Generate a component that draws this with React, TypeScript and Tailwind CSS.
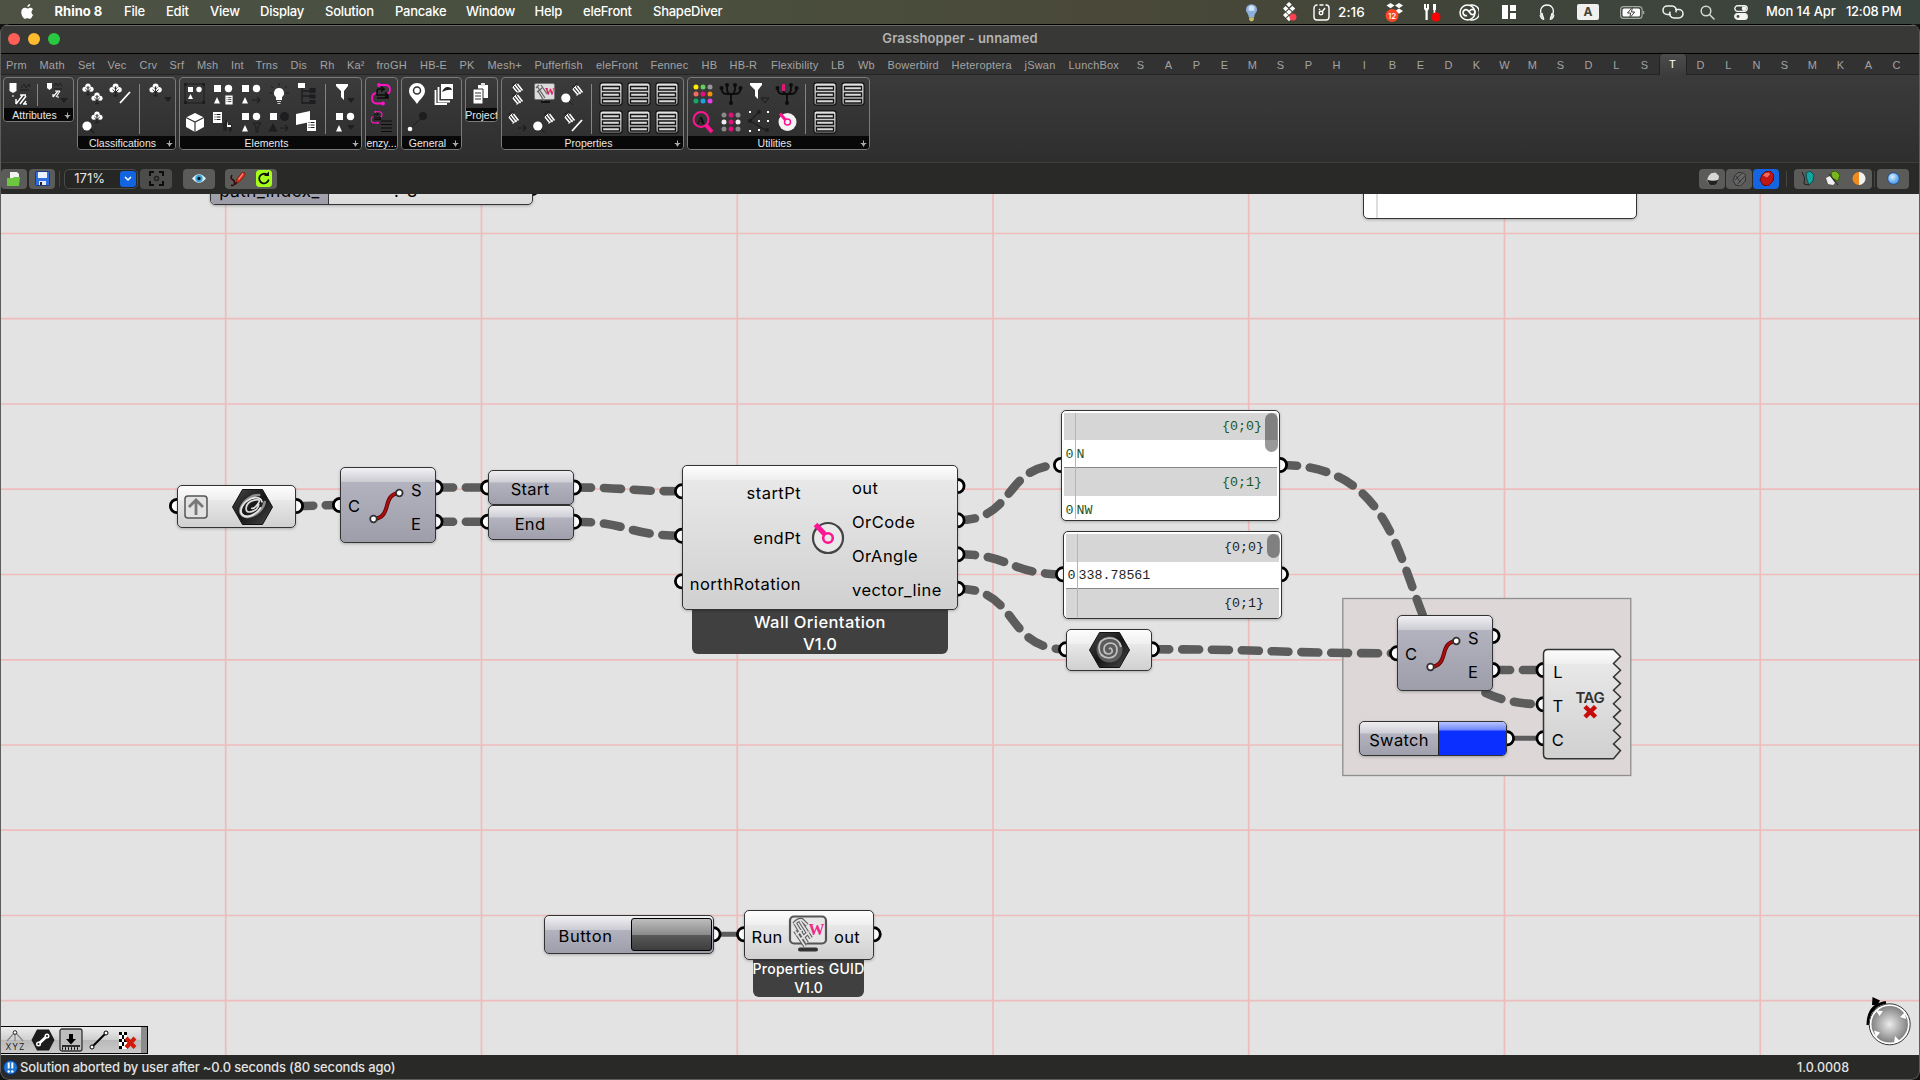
import React from 'react';

type Pt = [number, number];

/* ---------- menu bar ---------- */

const menus: [string, number][] = [
  ['File', 42], ['Edit', 44], ['View', 50], ['Display', 65], ['Solution', 70], ['Pancake', 71],
  ['Window', 68.5], ['Help', 48.5], ['eleFront', 70], ['ShapeDiver', 90],
];

function Slot({ w, children }: { w: number; children: React.ReactNode }) {
  return (
    <span className="flex h-6 shrink-0 items-center justify-center" style={{ width: w }}>
      {children}
    </span>
  );
}

function MenuBar() {
  return (
    <div className="flex h-6 items-center bg-[linear-gradient(to_right,#4d5245,#49503f_30%,#4a4939_58%,#414539_75%,#39443f)] text-[13px] font-medium text-white">
      <svg className="mb-[1px] ml-[20px] h-[17px] w-[15px]" viewBox="0 0 15 18" fill="#fff">
        <path d="M10.300 1c.1 1.700-1.300 3.200-3 3.300C7.100 2.700 8.700 1.100 10.300 1zM13 13.200c-.9 2-1.900 3.600-3.200 3.600-.9 0-1.300-.6-2.400-.6s-1.500.6-2.400.6C3.200 16.800.9 13 .9 9.800.9 6.700 2.700 5 4.600 5c1.100 0 2 .7 2.800.7.700 0 1.800-.8 3.200-.8 1.200 0 2.200.6 2.900 1.600-2.600 1.500-2.200 5.200.500 6.200z" />
      </svg>
      <span className="ml-[19.500px] w-[69.500px] shrink-0 font-bold">Rhino 8</span>
      {menus.map(([name, w]) => (
        <span key={name} className="shrink-0 tracking-[-0.25px]" style={{ width: w }}>{name}</span>
      ))}
      <div className="ml-auto flex items-center pr-[18px]">
        <Slot w={38}>
          <svg className="ml-[6px]" width="13" height="19" viewBox="0 0 14 20"><path d="M7 1a6 6 0 0 0-6 6c0 3 3 4 3 8h6c0-4 3-5 3-8a6 6 0 0 0-6-6z" fill="#8fb0de" /><path d="M4 4q3-3 6 0v4H4z" fill="#d5e6f8" /><path d="M4.500 15h5v3l-1.500 1.500h-2L4.500 18z" fill="#c9bd70" /></svg>
        </Slot>
        <Slot w={35}>
          <svg className="ml-[10px]" width="14" height="20" viewBox="0 0 14 20" fill="#fff"><path d="M6 0l2.800 2.600L6 5.200 3.200 2.600zM2.600 4l2.800 2.600-2.800 2.600L0 6.600zM9.400 4l2.800 2.600-2.800 2.600-2.800-2.600zM6 7.500l2.800 2.600L6 12.700l-2.800-2.600zM2.600 10.500l2.800 2.600-2.800 2.600L0 13.100zM6 14l2.800 2.600L6 19.200l-2.800-2.600z" /><circle cx="10" cy="15" r="3.500" fill="#ff4050" /></svg>
        </Slot>
        <Slot w={36}>
          <svg className="ml-[3px]" width="17" height="17" viewBox="0 0 17 17" fill="none" stroke="#fff" strokeWidth="1.400"><path d="M4.500 1H4a3 3 0 0 0-3 3v9a3 3 0 0 0 3 3h9a3 3 0 0 0 3-3V4a3 3 0 0 0-3-3h-.5M6.500 1h4" /><circle cx="8" cy="9" r="1.800" /><path d="M9 8l3-4M6 5l1 1" /></svg>
        </Slot>
        <span className="w-[42px] text-[13.500px] tracking-[0.1px]">2:16</span>
        <Slot w={26}>
          <svg className="ml-[4px]" width="20" height="20" viewBox="0 0 20 20" fill="#fff"><path d="M5.500 1l4 2.600-4 2.600-4-2.600zM14 1l4 2.600-4 2.600-4-2.600zM14 6.500l4 2.600-4 2.600-4-2.600z" /><circle cx="7" cy="13.500" r="6.500" fill="#fb4626" /><text x="7" y="16.500" fontSize="8" fontFamily="Inter" textAnchor="middle">12</text></svg>
        </Slot>
        <Slot w={46}>
          <svg className="ml-[6px]" width="17" height="20" viewBox="0 0 17 20" fill="#fff"><path d="M0 2h2v4h1V2h2v5L3.700 9v9H1.500V9L0 7zM9 2h3v6h-.7v8H9.600V8H9z" /><circle cx="12" cy="15" r="4.500" fill="#f00" /></svg>
        </Slot>
        <Slot w={34}>
          <svg width="20" height="17" viewBox="0 0 20 17" fill="none" stroke="#fff" strokeWidth="1.500"><circle cx="8.500" cy="8.500" r="7.500" /><path d="M11 1.300a7.500 7.500 0 1 1 0 14.400" /><path d="M8 11.500a3 3 0 1 1 .8-5.200l3.400 4a2.600 2.600 0 1 0 .4-4.800q-1 .3-2.600 2.300" strokeWidth="1.700" /></svg>
        </Slot>
        <Slot w={45}>
          <svg width="14" height="16" viewBox="0 0 14 16" fill="#fff"><path d="M0 1h6v14H0zM8 1h6v6H8zM8 9h6v6H8z" /></svg>
        </Slot>
        <Slot w={32}>
          <svg width="16" height="17" viewBox="0 0 16 17" fill="none" stroke="#fff" strokeWidth="1.300"><path d="M2.500 11C0 5 3.500 1 8 1s8 4 5.500 10" /><path d="M3 9l2 6.500-2.500-.8-1.500-3zM13 9l-2 6.500 2.500-.8 1.500-3z" fill="#ddd" strokeWidth="1" /></svg>
        </Slot>
        <Slot w={50}>
          <span className="flex h-4 w-[22px] items-center justify-center rounded-[2px] bg-[#f0f0ee] text-[12px] font-bold text-[#414539]">A</span>
        </Slot>
        <Slot w={38}>
          <svg width="25" height="13" viewBox="0 0 25 13" fill="none"><rect x=".6" y=".6" width="21.500" height="11.800" rx="3" stroke="#a6a8a4" strokeWidth="1.100" /><rect x="2.500" y="2.500" width="17.500" height="8" rx="1.500" fill="#fff" /><path d="M12.500 1L7.500 7h3.200l-1 5 5-6h-3.200z" fill="#fff" stroke="#414539" /><path d="M23.500 5v3" stroke="#a6a8a4" strokeWidth="1.500" /></svg>
        </Slot>
        <Slot w={43}>
          <svg width="22" height="14" viewBox="0 0 22 14" fill="none" stroke="#f2f2f2" strokeWidth="1.500"><path d="M9 9.500H5.200a4.200 4.200 0 0 1 0-8.400h5a4.200 4.200 0 0 1 3.600 6.300" /><path d="M13 4.500h3.800a4.200 4.200 0 0 1 0 8.400h-5a4.200 4.200 0 0 1-3.600-6.300" /></svg>
        </Slot>
        <Slot w={27}>
          <svg width="15" height="15" viewBox="0 0 15 15" fill="none" stroke="#d6d8d6" strokeWidth="1.500"><circle cx="6" cy="6" r="4.800" /><path d="M9.500 9.500l4.500 4.500" strokeLinecap="round" /></svg>
        </Slot>
        <Slot w={39}>
          <svg width="14" height="15" viewBox="0 0 14 15" fill="none" stroke="#f2f2f2" strokeWidth="1.400"><rect x=".8" y=".8" width="12.400" height="5.600" rx="2.800" /><rect x=".8" y="8.600" width="12.400" height="5.600" rx="2.800" fill="#f2f2f2" /><circle cx="10" cy="3.600" r="1.600" fill="#f2f2f2" /><circle cx="4" cy="11.400" r="1.400" fill="#414539" stroke="none" /></svg>
        </Slot>
        <span className="ml-[6px] w-[80px] whitespace-nowrap tracking-[-0.1px]">Mon 14 Apr</span>
        <span className="w-[56px] whitespace-nowrap tracking-[-0.3px]">12:08 PM</span>
      </div>
    </div>
  );
}

/* ---------- tabs ---------- */

const tabStarts: [string, number][] = [
  ['Prm', 6.5], ['Math', 40], ['Set', 78.5], ['Vec', 108], ['Crv', 140], ['Srf', 170], ['Msh', 197.5],
  ['Int', 231.5], ['Trns', 256], ['Dis', 291], ['Rh', 320.5], ['Ka²', 347.5], ['froGH', 377], ['HB-E', 420.5],
  ['PK', 460], ['Mesh+', 488], ['Pufferfish', 535], ['eleFront', 596.5], ['Fennec', 651], ['HB', 702],
  ['HB-R', 730], ['Flexibility', 771.5], ['LB', 831.5], ['Wb', 858.5], ['Bowerbird', 888],
  ['Heteroptera', 952], ['jSwan', 1025], ['LunchBox', 1069],
];
const letterTabs = 'SAPEMSPHIBEDKWMSDLSTDLNSMKAC'.split('');

function Tabs() {
  return (
    <div className="flex h-[22px] items-center border-t border-black bg-[#323232] pl-[6px] font-['Liberation_Sans',sans-serif] text-[11px] tracking-[0.2px] text-[#a3a3a3] shadow-[inset_0_-1px_0_#242424]">
      {tabStarts.map(([name, x], i) => (
        <span key={name} className="shrink-0 pt-px whitespace-nowrap" style={{ width: (i < tabStarts.length - 1 ? tabStarts[i + 1][1] : 1127) - x }}>{name}</span>
      ))}
      {letterTabs.map((l, i) =>
        l === 'T' ? (
          <span key={i} className="flex h-[22px] w-7 shrink-0 justify-center rounded-t-[4px] border-x border-[#222] bg-[linear-gradient(#4c4c4c,#3b3b3b)] pt-[2px] text-white">{l}</span>
        ) : (
          <span key={i} className="w-7 shrink-0 pt-px text-center">{l}</span>
        ),
      )}
    </div>
  );
}

/* ---------- ribbon icons (24 x 24) ---------- */

const W = '#fff';
const K = '#1d1d20';

function Ico({ children }: { children?: React.ReactNode }) {
  return (
    <span className="flex size-7 items-center justify-center">
      <svg width="24" height="24" viewBox="0 0 24 24" fill="none">{children}</svg>
    </span>
  );
}
const Tree = ({ x, y, s = 1 }: { x: number; y: number; s?: number }) => (
  <g transform={`translate(${x} ${y}) scale(${s})`}>
    <g fill={W}><circle cx="6" cy="3.200" r="2.700" /><circle cx="2.900" cy="6.200" r="2.500" /><circle cx="9.100" cy="6.200" r="2.500" /><circle cx="6" cy="6" r="2" /></g>
    <path d="M6 3v9M6 8.500L3.300 6M6 8.500L8.700 6M6 5.500L4.500 4M6 5.500L7.500 4M4 11.700h4" stroke={K} strokeWidth=".9" />
  </g>
);
const Clip = ({ x, y }: { x: number; y: number }) => (
  <g transform={`translate(${x} ${y})`}>
    <path d="M1 5l5 6M3 3l5.500 7M5.500 2l5 6.500" stroke={W} strokeWidth="1.500" />
    <path d="M1 5l3.500-3.500M4.500 11.500L10 7" stroke={W} strokeWidth=".9" />
    <path d="M3 0h3M.5 3L2 1" stroke={K} />
  </g>
);
const Sq = ({ x, y, c = W, s = 7 }: { x: number; y: number; c?: string; s?: number }) => <rect x={x} y={y} width={s} height={s} fill={c} />;
const Ci = ({ x, y, c = W, r = 3.7 }: { x: number; y: number; c?: string; r?: number }) => <circle cx={x} cy={y} r={r} fill={c} />;
const Tr = ({ x, y, c = W }: { x: number; y: number; c?: string }) => <path d={`M${x} ${y}l3 6.500h-6z`} fill={c} />;
const Doc = ({ x, y }: { x: number; y: number }) => (
  <g transform={`translate(${x} ${y})`}><path d="M0 0h9v11H0z" fill={W} /><path d="M1.500 2.500h1M3.500 2.500h4M1.500 5h1M3.500 5h4M1.500 7.500h1M3.500 7.500h4" stroke={K} /></g>
);
const Fn = ({ x, y, s = 1, c = W }: { x: number; y: number; s?: number; c?: string }) => (
  <path transform={`translate(${x} ${y}) scale(${s})`} d="M0 0h12v2L8 7v9l-3-3V7L0 2z" fill={c} />
);
const Dn = ({ x, y }: { x: number; y: number }) => <path d={`M${x} ${y}h8l-4 5z`} fill="#1f1f22" />;
const Arrow = ({ x, y }: { x: number; y: number }) => <path d={`M${x} ${y}h8m-3-3l3 3-3 3`} stroke={K} strokeWidth="1.200" />;

const Attr1 = () => <Ico><path d="M2.500 1h7v8l-3.500 2-3.500-2z" fill={W} /><path d="M14 6l3-4 2 4 3-4 1 3M13 8h9" stroke={K} /><path d="M6 13v2" stroke={W} /><path d="M9 22l7-9M13 22l6-8M17 22l2-3M9 17v5M13 13h6M16 22h4" stroke={W} strokeWidth="1.500" /></Ico>;
const Attr2 = () => <Ico><path d="M2 1h5v5l-2.500 2L2 6z" fill={W} /><path d="M9 4l2-3 2 3 2-3 2 3M9 7h8" stroke={K} /><path d="M8 15l5-6M11 15l4-6M10 9h5M8 12v3M12 15h2" stroke={W} strokeWidth="1.200" /><Dn x={15} y={16} /></Ico>;
const C1 = () => <Ico><Tree x={1} y={1} /><Tree x={10} y={10} /></Ico>;
const C2 = () => <Ico><Tree x={0} y={1} s={1.1} /><path d="M11 21L21 10" stroke={W} strokeWidth="1.800" /></Ico>;
const C3 = () => <Ico><Tree x={2} y={1} s={1.1} /><Dn x={17} y={15} /></Ico>;
const C4 = () => <Ico><Tree x={10} y={1} /><Ci x={6} y={16} r={4.6} /><path d="M9 19l4 4" stroke={K} strokeWidth="1.500" /></Ico>;
const E1 = () => <Ico><rect x="2" y="2" width="19" height="19" stroke={K} /><path d="M1 1h3v3H1zM19 1h3v3h-3zM1 19h3v3H1zM19 19h3v3h-3z" fill={K} /><Sq x={5} y={5} s={5} /><Ci x={16} y={7.5} r={2.7} /><path d="M7.500 12l2.500 5H5z" fill={W} /></Ico>;
const Trio = ({ children }: { children?: React.ReactNode }) => <Ico><Sq x={3} y={3} /><Ci x={17.5} y={6.5} /><Tr x={6} y={15} />{children}</Ico>;
const Bulb = () => <Ico><path d="M12 6a5 5 0 0 0-3 9v3h6v-3a5 5 0 0 0-3-9z" fill={W} /><path d="M10 19.500h4M10.500 21.500h3" stroke="#ccc" /><path d="M12 1v3M4 4l2 2M20 4l-2 2M2 11h3M19 11h3" stroke={K} /></Ico>;
const Hier = () => <Ico><rect x="3" y="1" width="7" height="5" fill={W} /><path d="M7 6v15h8M7 9h8M7 14h8" stroke={K} strokeWidth="1.300" /><path d="M14.500 6h6v5h-6zM14.500 12.500h6v4h-6zM14.500 18h6v4h-6z" fill={K} /></Ico>;
const FnDn = () => <Ico><Fn x={3} y={2} /><Dn x={14} y={16} /></Ico>;
const Cube = () => <Ico><path d="M12 3l9 4.500v9.500l-9 5-9-5V7.500z" fill={W} /><path d="M3 7.500l9 4.500 9-4.500M12 12v10" stroke="#333" strokeWidth="1.200" /></Ico>;
const DocCh = () => <Ico><Doc x={2} y={2} /><path d="M15 10v5h5v6M15 15v6M13 13v8M19 18v4" stroke={K} strokeWidth="1.200" /><path d="M16 11l1 4h3v2h-4z" fill={W} /></Ico>;
const SqDot = () => <Ico><Sq x={3} y={3} /><Ci x={17.5} y={6.5} c={K} r={4.5} /><path d="M6 13l4.500 8.500h-9z" fill={K} /><Arrow x={13} y={18} /></Ico>;
const Flag = () => <Ico><path d="M1 4l14-3v11L1 15z" fill={W} /><Doc x={12} y={10} /></Ico>;
const Loop = ({ s = 1 }: { s?: number }) => (
  <g transform={`translate(1 0) scale(${s})`}><path d="M9 3h6q5 0 5 4.500T16.500 12M7 11q-5 0-5 5t4 5.500h7" stroke="#ff12c4" strokeWidth="1.800" /><path d="M14 7H9q-2 0-2 3v3h9q2 0 2 3H7M11 4.500L14 7l-3 2.500M15 10.500l3 2.500-3 2.500" stroke="#0b0b0b" strokeWidth="1.600" /><circle cx="9" cy="3" r="1.900" fill="#ff12c4" /><circle cx="13" cy="21.500" r="1.900" fill="#ff12c4" /></g>
);
const Pin = () => <Ico><path d="M12 1a8 8 0 0 0-8 8c0 5 5 8 8 13 3-5 8-8 8-13a8 8 0 0 0-8-8z" fill={W} /><circle cx="12" cy="8.500" r="3.500" stroke="#333" strokeWidth="1.500" /></Ico>;
const Pages = () => <Ico><path d="M8 2h12v15H8z" fill={W} /><path d="M5.500 5v14.500H17M2.500 8v14H14" stroke={W} strokeWidth="1.800" /><path d="M9 10q3-7 9-4l1 2q-4-1-10 2z" fill="#222" /></Ico>;
const Link = () => <Ico><path d="M5 19L18 6" stroke={K} /><circle cx="5" cy="19" r="2.300" fill={W} /><circle cx="18" cy="6" r="4" fill={K} /></Ico>;
const Proj = () => <Ico><path d="M9 3h10v13H9z" fill={W} /><path d="M12 1h4v3h-4z" fill="#ddd" /><path d="M4 7h10v15H4z" fill={W} stroke="#333" /><path d="M6 11h6M6 14h6M6 17h6" stroke="#333" strokeWidth="1.200" /></Ico>;
const P1 = () => <Ico><Clip x={7} y={0} /><Clip x={7} y={11} /></Ico>;
const Monitor = () => (
  <>
    <rect x="1.500" y="1.500" width="20" height="16" rx="1.500" fill="#dcdcdc" stroke="#777" /><path d="M8 20h9" stroke="#111" strokeWidth="2" />
    <path d="M4 4l8 12M8 3l6 9M5 9l6 10M3 6l3-3M9 6l-5 4" stroke="#666" strokeWidth="1.300" />
    <text x="12" y="12.500" fontSize="10" fontWeight="700" fontFamily="Liberation Serif" fill="#d91663">W</text>
  </>
);
const P2 = () => <Ico><Monitor /></Ico>;
const P3 = () => <Ico><Ci x={4.8} y={16} r={4.6} /><Clip x={11} y={2} /><path d="M8 19l4 4" stroke={K} /></Ico>;
const P4 = () => <Ico><Clip x={3} y={2} /><Arrow x={13} y={18} /></Ico>;
const P6 = () => <Ico><Clip x={3} y={2} /><path d="M11 21L21 10" stroke={W} strokeWidth="1.800" /></Ico>;
const List = () => (
  <span className="flex size-7 items-center justify-center">
    <svg width="24" height="24" viewBox="0 0 24 24"><defs><linearGradient id="lst" x2="0" y2="1"><stop stopColor="#e6e6e6" /><stop offset="1" stopColor="#a4a4a4" /></linearGradient></defs><rect x=".9" y=".9" width="22.200" height="22.200" rx="2.500" fill="url(#lst)" stroke="#111" strokeWidth="1.200" /><path d="M3.500 4.500h17v3.500h-17zM3.500 11h17v3.500h-17zM3.500 17.500h17v3.500h-17z" fill="#d9d9d9" stroke="#151515" strokeWidth="1.300" /></svg>
  </span>
);
const Dots = ({ c }: { c: string[] }) => (
  <Ico>{c.map((k, i) => <circle key={i} cx={[5, 12, 19][i % 3]} cy={[5, 12, 19][Math.floor(i / 3)]} r="2.500" fill={k} />)}</Ico>
);
const Fork = ({ pink }: { pink?: boolean }) => (
  <Ico><path d="M12 22v-9M2.500 6q0 6 5 6h9q5 0 5-6M8 4v3q0 4 4 6M16 4v3q0 4-4 6" stroke="#0c0c0c" strokeWidth="1.800" />{pink && <path d="M8.500 2v7" stroke="#d81b7a" strokeWidth="3" />}<g fill="#0c0c0c"><circle cx="2.500" cy="6" r="2" />{!pink && <circle cx="8" cy="3" r="2" />}<circle cx="16" cy="3" r="2" /><circle cx="21.500" cy="6" r="2" /><circle cx="12" cy="21" r="2" /></g></Ico>
);
const FnU = () => <Ico><Fn x={3} y={1} s={1} /><path d="M14 16h8l-4 5z" stroke="#1b1b1b" /></Ico>;
const Mag = () => <Ico><circle cx="10" cy="9.500" r="7.500" stroke="#ff1493" strokeWidth="2" /><path d="M15 15l6 7" stroke="#ff1493" strokeWidth="4" /><text x="10" y="13.500" fontSize="11" fontWeight="700" fontFamily="Liberation Serif" textAnchor="middle" fill="#0a0a0a">A</text></Ico>;
const Net = () => <Ico><path d="M12 2L3 11l17 10" stroke={K} strokeWidth="1.200" /><g fill={W}>{[[3, 2], [21, 2], [12, 11], [21, 11], [3, 21], [12, 20]].map(([x, y]) => <rect key={`${x}-${y}`} x={x - 1} y={y - 1} width="2" height="2" />)}</g><circle cx="12" cy="2" r="2" fill={K} /><circle cx="3" cy="11" r="2" fill={K} /><circle cx="20" cy="20" r="2" fill={K} /></Ico>;
const Dial = () => <Ico><circle cx="12.500" cy="12" r="9" fill="#f3f3f3" /><circle cx="12.500" cy="12" r="3" stroke="#ff1493" strokeWidth="1.500" /><path d="M10.500 10L5 3.500" stroke="#ff1493" strokeWidth="3" /></Ico>;

const Sep = () => <span className="mt-1 h-[calc(100%-6px)] w-[10px] shrink-0 bg-[linear-gradient(to_right,transparent_4px,#858585_4px,#858585_5px,transparent_5px)]" />;

type Ic = () => React.JSX.Element;
function Cols({ cols }: { cols: Ic[][] }) {
  return (
    <>
      {cols.map((c, i) => (
        <span key={i} className="flex w-7 flex-col">{c.map((C, j) => <C key={j} />)}</span>
      ))}
    </>
  );
}

function Panel({ label, size, left, right, arrow = true }: { label: string; size: string; left: Ic[][]; right?: Ic[][]; arrow?: boolean }) {
  return (
    <div className={`flex shrink-0 flex-col overflow-hidden rounded-[4px] border border-[#7b7b7b] bg-[linear-gradient(#3b3b3b,#2e2e2e)] ${size}`}>
      <div className="flex min-h-0 flex-1 pt-[2px] pl-px">
        <Cols cols={left} />
        {right && <Sep />}
        {right && <Cols cols={right} />}
      </div>
      <div className="flex h-[13px] shrink-0 items-center justify-center bg-[#080808] pt-[1px] font-['Liberation_Sans',sans-serif] text-[10.500px] leading-none text-[#e8e8e8]">
        <span className="flex-1 text-center whitespace-nowrap">{label}</span>
        {arrow && (
          <svg className="mr-[2px] -ml-[1px]" width="7" height="9" viewBox="0 0 8 9"><path d="M4 1v5M.8 4.500h6.400" stroke="#aaa" strokeWidth="1.200" /><path d="M2 5h4L4 8.500z" fill="#aaa" /></svg>
        )}
      </div>
    </div>
  );
}

const G = '#8a8a8a';
function Ribbon() {
  return (
    <div className="flex h-[88px] items-start gap-[3px] bg-[linear-gradient(#3b3b3b,#2e2e2e)] pt-[2px] pl-[3px] shadow-[inset_0_-1px_0_#3f3f3f]">
      <Panel label="Attributes" size="h-[45px] w-[71px]" left={[[Attr1]]} right={[[Attr2]]} />
      <Panel label="Classifications" size="h-[73px] w-[99px]" left={[[C1, C4], [C2]]} right={[[C3]]} />
      <Panel
        label="Elements"
        size="h-[73px] w-[183px]"
        left={[
          [E1, Cube],
          [() => <Trio><g transform="scale(.8)"><Doc x={18} y={17} /></g></Trio>, DocCh],
          [() => <Trio><Arrow x={13} y={18} /></Trio>, () => <Trio><path d="M14 13h8l-3 4v5h-2v-5z" stroke={K} /></Trio>],
          [Bulb, SqDot],
          [Hier, Flag],
        ]}
        right={[[FnDn, () => <Trio><Dn x={14} y={15} /></Trio>]]}
      />
      <Panel label="enzy..." size="h-[73px] w-[33px]" arrow={false} left={[[() => <Ico><Loop /></Ico>, () => <Ico><Loop s={0.6} /><path d="M12 11h11M12 14.500h11M12 18h11M12 21.500h11" stroke="#0b0b0b" strokeWidth="1.200" /></Ico>]]} />
      <Panel label="General" size="h-[73px] w-[61px]" left={[[Pin, Link], [Pages]]} />
      <Panel label="Project" size="h-[45px] w-[33px]" arrow={false} left={[[Proj]]} />
      <Panel label="Properties" size="h-[73px] w-[183px]" left={[[P1, P4], [P2, P3], [P3, P6]]} right={[[List, List], [List, List], [List, List]]} />
      <Panel
        label="Utilities"
        size="h-[73px] w-[183px]"
        left={[
          [() => <Dots c={['#ffee00', '#66cc66', '#999', '#f26d5b', '#e0107c', '#f09010', '#16a86b', '#17a5e0', '#e040e8']} />, Mag],
          [() => <Fork />, () => <Dots c={[G, '#e0107c', G, '#eee', '#e0107c', '#eee', G, '#e0107c', G]} />],
          [FnU, Net],
          [() => <Fork pink />, Dial],
        ]}
        right={[[List, List], [List]]}
      />
    </div>
  );
}

/* ---------- canvas toolbar ---------- */

function Btn({ className, children }: { className: string; children: React.ReactNode }) {
  return <span className={`flex h-5 shrink-0 items-center justify-center rounded-[4px] ${className}`}>{children}</span>;
}
const gem = 'M6 1l5-1 4 4-1 6-5 5-5-1-3-5 2-5z';
function Toolbar() {
  return (
    <div className="flex h-[31px] items-center bg-[#292927] pl-px">
      <Btn className="w-[26px] bg-[#5b5b59]"><svg width="16" height="16" viewBox="0 0 16 16"><path d="M4 1h7l2 2v6H4z" fill="#f2f2f2" /><path d="M1 7h6l1-1h6l-1 9H1z" fill="#6cc63f" /></svg></Btn>
      <Btn className="ml-[2px] w-[26px] bg-[#5b5b59]"><svg width="15" height="15" viewBox="0 0 15 15"><rect x=".5" y=".5" width="14" height="14" rx="1" fill="#2f6fe0" stroke="#173a85" /><path d="M3 1h9v6H3z" fill="#eaf1ff" /><path d="M4 10h7v4H4z" fill="#e8e8e8" /><path d="M5 11h2v3H5z" fill="#223" /></svg></Btn>
      <span className="ml-1 h-4 w-px bg-[#454543]" />
      <div className="ml-1 flex h-5 w-[74px] items-center justify-end rounded-[5px] border border-[#4b4b49] bg-[#262624] pr-[1px]">
        <span className="mr-[15px] pt-px text-[13px] text-[#e6e6e6]">171%</span>
        <span className="flex h-4 w-4 items-center justify-center rounded-[3px] bg-[#1264e0]"><svg width="8" height="6" viewBox="0 0 8 6"><path d="M1 1l3 3 3-3" fill="none" stroke="#fff" strokeWidth="1.500" /></svg></span>
      </div>
      <Btn className="ml-[2px] w-8 bg-[#4c4c4a]"><svg width="15" height="15" viewBox="0 0 15 15" fill="none" stroke="#0d0d0d" strokeWidth="2"><path d="M1 5V1h4M10 1h4v4M14 10v4h-4M5 14H1v-4" /><circle cx="7.500" cy="7.500" r="2" stroke="#222" strokeWidth="1.500" /></svg></Btn>
      <Btn className="ml-[11px] w-8 bg-[#5b5b59]"><svg width="14" height="9" viewBox="0 0 14 9"><path d="M0 4.500Q7-4 14 4.500 7 13 0 4.500z" fill="#dff1fa" /><circle cx="7" cy="4.500" r="3.700" fill="#3fa7d8" /><circle cx="7" cy="4.500" r="1.700" fill="#0a1a26" /></svg></Btn>
      <Btn className="ml-[10px] w-[26px] rounded-r-none bg-[#5b5b59]"><svg width="16" height="16" viewBox="0 0 16 16"><path d="M6.500 12l.5-4 5-6.500L15 2l-.5 3-5 5.500z" fill="#e2321f" stroke="#7c0f06" strokeWidth=".7" /><path d="M8.500 8.500l4.500-6" stroke="#ff9a80" strokeWidth="1.200" /><path d="M2 4q-2 3 .5 4.500t2 4Q3.500 15.500 1 14M5 13.500l2-2" stroke="#3a0a08" strokeWidth="1.600" fill="none" /></svg></Btn>
      <Btn className="w-[26px] rounded-l-none bg-[#5b5b59]"><svg width="16" height="17" viewBox="0 0 16 17"><rect width="16" height="17" rx="3.500" fill="#a6ff1a" /><path d="M12.700 9.500A4.800 4.800 0 1 1 11 4.800" fill="none" stroke="#111" strokeWidth="1.800" /><path d="M8 6h5V1.500z" fill="#111" /></svg></Btn>
      <div className="ml-auto flex items-center pr-[11px]">
        <Btn className="w-[26px] bg-[#5b5b59]"><svg width="13" height="14" viewBox="0 0 15 15"><path d={gem} fill="#d8d8d8" /><path d="M1 8q7 3 14 0l-3 5-3 2-5-1z" fill="#222" /></svg></Btn>
        <Btn className="ml-px w-[26px] bg-[#5b5b59]"><svg width="14" height="14" viewBox="0 0 15 15"><path d={gem} fill="#666" stroke="#2c2c2c" /><path d="M3 9l8-8M6 13l8-9M4 4l5 7" stroke="#2c2c2c" /></svg></Btn>
        <Btn className="ml-px w-[26px] bg-[#1565e0]"><svg width="15" height="15" viewBox="0 0 15 15"><path d={gem} fill="#c01616" stroke="#6d0505" /><path d="M6 2l4-.5 1 2-3 3-4-2z" fill="#f06a5c" /></svg></Btn>
        <span className="mx-[7px] h-4 w-px bg-[#454543]" />
        <Btn className="w-[26px] rounded-r-none bg-[#5b5b59]"><svg className="ml-[2px]" width="15" height="15" viewBox="0 0 15 15"><path d="M5 2l4-2 4 4-1 6-4 4-2-5z" fill="#14a5a0" stroke="#064f4f" /><path d="M1 1q4 6 2 12l5 1" fill="none" stroke="#222" /></svg></Btn>
        <Btn className="w-[26px] rounded-none bg-[#5b5b59]"><svg width="16" height="15" viewBox="0 0 16 15"><path d="M6 1l5-1 4 4-2 6-6-3z" fill="#79b51c" stroke="#38610b" /><path d="M1 7l4-2 5 7-2 2-5-1z" fill="#f0f0f0" /><path d="M4 3l9 11" stroke="#222" /></svg></Btn>
        <Btn className="w-[26px] rounded-l-none bg-[#5b5b59]"><svg width="14" height="15" viewBox="0 0 14 15"><path d="M7 1a6.500 6.500 0 0 0 0 13z" fill="#f08a1c" /><path d="M7 1a6.500 6.500 0 0 1 0 13z" fill="#f2f2f2" /></svg></Btn>
        <span className="mx-[2px] h-4 w-px bg-[#454543]" />
        <Btn className="w-8 bg-[#5b5b59]"><svg width="13" height="13" viewBox="0 0 13 13"><defs><radialGradient id="sph" cx=".4" cy=".35"><stop stopColor="#d9f0ff" /><stop offset="1" stopColor="#62a8ea" /></radialGradient></defs><circle cx="6.500" cy="6.500" r="5.800" fill="url(#sph)" stroke="#1d4f94" /></svg></Btn>
      </div>
    </div>
  );
}

/* ---------- canvas ---------- */

const gridX = [225.7, 481.5, 737.3, 993, 1248.7, 1504.5, 1760.3];
const gridY = [233.5, 318.7, 404, 489.2, 574.5, 659.8, 745, 830.2, 915.5, 1000.7];

const wires: [Pt, Pt][] = [
  [[296, 506], [340, 505]],
  [[436, 487.5], [488, 487.5]],
  [[436, 521.7], [488, 521.7]],
  [[574, 487.5], [682, 491.3]],
  [[574, 521.7], [682, 535.7]],
  [[958, 520.3], [1061, 465]],
  [[958, 554.3], [1063, 574.3]],
  [[958, 588.7], [1066, 649.3]],
  [[1152, 649.3], [1397, 653.3]],
  [[1280, 465], [1543, 704.3]],
  [[1493, 670], [1543, 670]],
];
const grips: Pt[] = [
  [177, 506], [296, 506], [340, 505], [435.5, 487.5], [435.5, 521.7], [488, 487.5], [488, 521.7], [574, 487.5], [574, 521.7],
  [682, 491.3], [682, 535.7], [682, 581.3], [957.5, 486], [957.5, 520.3], [957.5, 554.3], [957.5, 588.7],
  [1061, 465], [1280, 465], [1063, 574.3], [1281, 574.3], [1066, 649.3], [1152, 649.3],
  [1397, 653.3], [1492.5, 636], [1492.5, 670], [1543.5, 670], [1543.5, 704.3], [1543.5, 738.3], [1507, 738.3],
  [713.5, 934.3], [744, 934.3], [873.7, 934.3], [532, 188],
];

function wirePath([[x1, y1], [x2, y2]]: [Pt, Pt]) {
  const d = Math.hypot(x2 - x1, y2 - y1) / 2;
  return `M${x1} ${y1}C${x1 + d} ${y1} ${x2 - d} ${y2} ${x2} ${y2}`;
}

const LIGHT = 'bg-[linear-gradient(to_bottom,#fdfdfd_0,#efefef_14px,#e8e8e8_14px,#d0d0d0_100%)]';
const BLUE = 'bg-[linear-gradient(to_bottom,#f1f1f4_0,#cbcbd3_14px,#b3b3bf_14px,#9e9eab_100%)]';
const BLUE_S = 'bg-[linear-gradient(to_bottom,#eeeef1_0,#cfcfd6_11px,#b3b3bf_12px,#a0a0ad_100%)]';

function Node({ className, children }: { className: string; children?: React.ReactNode }) {
  return <div className={`absolute flex rounded-[5px] border-[1.500px] border-[#333] shadow-[0_1px_3px_rgba(0,0,0,0.25)] ${className}`}>{children}</div>;
}

function EndPoints({ className }: { className: string }) {
  return (
    <Node className={`h-[76px] w-[96px] justify-between ${BLUE} ${className}`}>
      <div className="flex items-center pt-[3px] pl-[7px]">C</div>
      <svg className="absolute top-[19px] left-[25.500px]" width="40" height="40" viewBox="0 0 40 40" fill="none">
        <path d="M7 32C26 30 14 8 32 6" stroke="#5d0000" strokeWidth="4" />
        <path d="M7 32C26 30 14 8 32 6" stroke="#a80f0f" strokeWidth="2.400" />
        <circle cx="6.500" cy="32" r="3.300" fill="#fff" stroke="#333" strokeWidth="1.800" />
        <circle cx="32.300" cy="6" r="3.300" fill="#fff" stroke="#333" strokeWidth="1.800" />
      </svg>
      <div className="flex flex-col justify-center pt-[3px] pr-[13px] leading-[34px]">
        <span>S</span>
        <span>E</span>
      </div>
    </Node>
  );
}

function Hexagon({ spiral }: { spiral?: boolean }) {
  return (
    <svg width="41" height="36" viewBox="0 0 41 36" fill="none">
      <defs><linearGradient id="hex" x2="1" y2="1"><stop stopColor="#4a4a4a" /><stop offset=".5" stopColor="#161616" /><stop offset="1" stopColor="#4a4a4a" /></linearGradient></defs>
      <path d="M10.500.5h20l10 17.500-10 17.500h-20L.5 18z" fill="url(#hex)" stroke="#111" />
      {spiral ? (
        <>
          <circle cx="20.500" cy="17.500" r="13" fill="#5c5c5c" />
          <path d="M20 17q2-2 3 1t-3 4q-5 0-5-5t6-6q7 0 7 7t-8 8q-10-1-10-10T20 6q10 0 12 9" stroke="#c2c2c2" strokeWidth="1.700" />
        </>
      ) : (
        <g transform="rotate(-38 20 18)" strokeLinecap="round">
          <path d="M33 13a14 8.500 0 1 0 0 9" stroke="#8e8e8e" strokeWidth="2.600" />
          <path d="M31 20a12 7.500 0 1 0-5 4" stroke="#e8e8e8" strokeWidth="1.800" />
          <path d="M27 20q-4 4-10 1.500t-2-6.500 11-1 1 5-8 0" stroke="#dedede" strokeWidth="1.700" />
        </g>
      )}
    </svg>
  );
}

function DataPanel({ className, color, thumb, rows }: { className: string; color: string; thumb: string; rows: [string, string, string][] }) {
  return (
    <Node className={`flex-col overflow-hidden bg-white p-[2px] font-['Liberation_Mono',monospace] text-[13.300px] ${color} ${className}`}>
      {rows.map(([idx, text, cls], i) =>
        idx === '' ? (
          <div key={i} className={`flex shrink-0 items-center justify-end bg-[#d6d6d6] pr-[15px] ${cls}`}>{text}</div>
        ) : (
          <div key={i} className={`flex shrink-0 items-center pt-[2px] ${cls}`}><span className="w-[12.500px] pl-[1.500px]">{idx}</span><span>{text}</span></div>
        ),
      )}
      <span className="absolute top-[2px] bottom-[1px] left-[12.500px] w-px bg-[#b5b5b5]" />
      <span className={`absolute top-[2px] right-px w-[13px] rounded-full bg-black/40 ${thumb}`} />
    </Node>
  );
}

const zig = 'M1548 649.500H1613.500l7 7-7 7 7 6.700-7 6.700 7 6.700-7 6.700 7 6.700-7 6.700 7 6.700-7 6.700 7 6.700-7 6.700 7 6.700-7 6.700 7 6.700-7 8.200H1548q-4.500 0-4.500-4.500V654q0-4.500 4.500-4.500z';

function Canvas() {
  return (
    <div className="relative h-[861px] overflow-hidden bg-[#e3e3e3]">
      <div className="absolute -top-[194px] left-0 h-[1080px] w-[1920px] text-[16.500px] tracking-[0.3px] text-black">
        <svg className="absolute inset-0" width="1920" height="1080" fill="none">
          <g stroke="#efbcbc" strokeWidth="1.700">
            {gridX.map((x) => <path key={x} d={`M${x} 0V1080`} />)}
            {gridY.map((y) => <path key={y} d={`M0 ${y}H1920`} />)}
          </g>
          <rect x="1342.800" y="598.500" width="288" height="177" fill="#ddd7d7" stroke="#908d8d" strokeWidth="1.300" />
          <g stroke="#5c5c5c" strokeWidth="8.600" strokeLinecap="round" strokeDasharray="17 12.900">
            {wires.map((w, i) => <path key={i} d={wirePath(w)} />)}
          </g>
          <path d="M714 934.300H744M1507 738.300H1543" stroke="#5c5c5c" strokeWidth="5" />
          {grips.map(([x, y], i) => <circle key={i} cx={x} cy={y} r="6.600" fill="#fff" stroke="#000" strokeWidth="2.800" />)}
          <path d={zig} fill="url(#tagfill)" stroke="#333" strokeWidth="1.500" />
          <defs><linearGradient id="tagfill" x2="0" y2="1"><stop stopColor="#fdfdfd" /><stop offset=".13" stopColor="#efefef" /><stop offset=".131" stopColor="#e8e8e8" /><stop offset="1" stopColor="#d0d0d0" /></linearGradient></defs>
          <path d="M1585 706.500l10.500 10.500M1595.500 706.500l-10.500 10.500" stroke="#c80a0a" strokeWidth="4.500" />
        </svg>

        <Node className="top-[160px] left-[210px] h-[45px] w-[323px] overflow-hidden bg-[linear-gradient(#eee,#dcdcdc)]">
          <div className="flex w-[118px] items-end justify-center border-r-[1.500px] border-[#333] bg-[linear-gradient(#b3b3bf,#9e9eab)] pb-[3px] text-[17px] leading-[20px] tracking-[0.5px]">path_index_</div>
          <div className="flex items-end gap-[8px] pb-[3px] pl-[65px] leading-[20px]"><span>.</span><span>8</span></div>
        </Node>
        <Node className="top-[150px] left-[1363px] h-[69px] w-[274px] bg-white"><span className="ml-[12px] w-[2px] bg-[#ddd]" /></Node>

        <Node className={`top-[485px] left-[177px] h-[43px] w-[119px] items-center pl-[6px] ${LIGHT}`}>
          <svg width="24" height="24" viewBox="0 0 24 24" fill="none"><rect x="1" y="1" width="22" height="22" rx="3" stroke="#555" strokeWidth="1.500" fill="#e2e2e2" /><path d="M12 20V6M5 12l7-7 7 7" stroke="#777" strokeWidth="2.800" /></svg>
          <span className="ml-[24px]"><Hexagon /></span>
        </Node>
        <EndPoints className="top-[467px] left-[340px]" />
        <Node className={`top-[470px] left-[488px] h-[35px] w-[86px] items-center justify-center pt-[4px] pr-[2px] ${BLUE_S}`}>Start</Node>
        <Node className={`top-[505px] left-[488px] h-[35px] w-[86px] items-center justify-center pt-[3px] pr-[2px] ${BLUE_S}`}>End</Node>

        <div className="absolute top-[605px] left-[692px] flex h-[49px] w-[256px] flex-col items-center rounded-b-[6px] bg-[#404040] pt-[6px] leading-[22px] font-medium tracking-[0.4px] text-white">
          <span>Wall Orientation</span>
          <span className="tracking-normal">V1.0</span>
        </div>
        <Node className={`top-[465px] left-[682px] h-[145px] w-[276px] tracking-[0.45px] ${LIGHT}`}>
          <div className="flex w-[118px] flex-col justify-center pt-[3px] text-right leading-[45.500px]">
            <span>startPt</span>
            <span>endPt</span>
            <span>northRotation</span>
          </div>
          <svg className="mt-[52.500px] ml-[7.500px]" width="38" height="38" viewBox="0 0 38 38" fill="none">
            <circle cx="19" cy="19" r="15" fill="#e9e9e9" stroke="#444" strokeWidth="2.200" />
            <circle cx="19" cy="19" r="4.800" stroke="#ff1493" strokeWidth="2.600" />
            <path d="M15.500 15L6.500 5.500" stroke="#ff1493" strokeWidth="5" />
          </svg>
          <div className="ml-[5.500px] flex flex-col justify-center pt-[3px] leading-[34px]">
            <span>out</span>
            <span>OrCode</span>
            <span>OrAngle</span>
            <span>vector_line</span>
          </div>
        </Node>

        <DataPanel
          className="top-[410px] left-[1061px] h-[111px] w-[219px]"
          color="text-[#1c561c] tracking-normal"
          thumb="h-[39px]"
          rows={[['', '{0;0}', 'h-[27px]'], ['0', 'N', 'h-[28px] border-b border-[#888]'], ['', '{0;1}', 'h-[28px] pt-px'], ['0', 'NW', 'h-[28px]']]}
        />
        <DataPanel
          className="top-[531px] left-[1063px] h-[88px] w-[219px]"
          color="text-[#1f1f1f] tracking-normal"
          thumb="h-[24px]"
          rows={[['', '{0;0}', 'h-[28px]'], ['0', '338.78561', 'h-[27px] border-b border-[#888]'], ['', '{0;1}', 'h-[29px]']]}
        />
        <Node className={`top-[629px] left-[1066px] h-[42px] w-[86px] items-center justify-center ${LIGHT}`}><Hexagon spiral /></Node>

        <EndPoints className="top-[615px] left-[1397px]" />
        <div className="absolute top-[655px] left-[1551px] flex w-[14px] flex-col text-center leading-[34px]">
          <span>L</span>
          <span>T</span>
          <span>C</span>
        </div>
        <div className="absolute top-[688px] left-[1575.500px] text-[15px] leading-[19px] font-semibold tracking-[-0.5px] text-[#333]">TAG</div>
        <Node className={`top-[721px] left-[1359px] h-[35px] w-[148px] overflow-hidden ${BLUE_S}`}>
          <span className="flex w-[79px] items-center justify-center border-r-[1.500px] border-[#222] pt-[3px]">Swatch</span>
          <span className="flex-1 bg-[linear-gradient(to_bottom,#b9c4ff_0,#6f86ff_8px,#0a2fff_9px)]" />
        </Node>

        <Node className={`top-[915px] left-[544px] h-[39px] w-[170px] items-center justify-between pr-[1px] pl-[13.500px] ${BLUE}`}>
          <span className="pt-[4px] tracking-[0.6px]">Button</span>
          <span className="h-[33px] w-[81px] rounded-[3px] border-[1.500px] border-black bg-[linear-gradient(to_bottom,#bdbdbd_0,#8c8c8c_50%,#5a5a5a_51%,#3d3d3d_100%)]" />
        </Node>
        <div className="absolute top-[955px] left-[753px] flex h-[42px] w-[111px] flex-col items-center rounded-b-[6px] bg-[#404040] pt-[4px] text-[14px] leading-[19px] font-medium whitespace-nowrap text-white">
          <span>Properties GUID</span>
          <span className="tracking-normal">V1.0</span>
        </div>
        <Node className={`top-[910px] left-[744px] h-[50px] w-[130px] items-center justify-between pr-[13px] pl-[6.500px] ${LIGHT}`}>
          <span className="pt-[4px]">Run</span>
          <svg className="mb-[2px]" width="40" height="38" viewBox="0 0 40 38" fill="none">
            <rect x="2" y="1.500" width="36" height="27" rx="4" fill="#e6e6e6" stroke="#555" strokeWidth="2.200" />
            <path d="M12 34.500h16" stroke="#333" strokeWidth="4" strokeLinecap="round" />
            <text x="20.500" y="20" fontSize="16" fontWeight="700" fontFamily="Liberation Serif" fill="#f0278c">W</text>
            <path d="M7 8l12 20M12 6l11 17M7 16l10 15M6 9q4-5 8-4l5 5M8 20l6-5M12 25l9-8" stroke="#5c5c5c" strokeWidth="4" />
            <path d="M7 8l12 20M12 6l11 17M7 16l10 15M6 9q4-5 8-4l5 5M8 20l6-5M12 25l9-8" stroke="#e2e2e2" strokeWidth="1.800" />
          </svg>
          <span className="pt-[4px]">out</span>
        </Node>

        <svg className="absolute top-[994px] left-[1862px]" width="52" height="54" viewBox="0 0 52 54">
          <defs><radialGradient id="cmp"><stop stopColor="#ececec" /><stop offset="1" stopColor="#7b7b7b" /></radialGradient></defs>
          <path d="M6 31Q6 11 24 8.500" fill="none" stroke="#000" strokeWidth="3" />
          <path d="M10.500 3l7.500 3.500-3 5-5-.5z" />
          <circle cx="27.700" cy="30.300" r="19.500" fill="url(#cmp)" stroke="#fff" strokeWidth="2.500" />
          <circle cx="27.700" cy="30.300" r="20.500" fill="none" stroke="#333" />
          <path d="M14 16.500l7 .5-3.500 5zM43 18l1 7-6-2zM12 36.500l6 2-4 5zM33 42l5 5-6 2z" fill="#fff" />
        </svg>

        <div className="absolute top-[1026px] left-0 flex h-7 w-[148px] items-center gap-[4px] border border-black bg-[linear-gradient(to_bottom,#ededed_0,#cfcfcf_49%,#b9b9b9_50%,#cacaca_100%)] pl-[2px] shadow-[inset_-6px_0_0_#8c8c8c]">
          <svg width="24" height="24" viewBox="0 0 24 24" fill="none"><path d="M12 4L4 13M12 4v9M12 4l8 9" stroke="#888" strokeWidth="1.300" /><circle cx="12" cy="4.500" r="1.800" fill="#fff" stroke="#222" /><text x="12.500" y="22" fontSize="8.500" textAnchor="middle" letterSpacing="1" fontFamily="Inter" fill="#222">XYZ</text></svg>
          <svg width="24" height="24" viewBox="0 0 24 24" fill="none"><path d="M6 1.500h12l5.500 10.500L18 22.500H6L.5 12z" fill="#1c1c1c" /><path d="M7.500 16l8.500-8" stroke="#fff" strokeWidth="3" /><circle cx="7.500" cy="16" r="2.500" fill="#fff" /><circle cx="16" cy="8" r="2.500" fill="#fff" /><circle cx="7.500" cy="16" r="1" fill="#111" /><circle cx="16" cy="8" r="1" fill="#111" /></svg>
          <svg width="24" height="24" viewBox="0 0 24 24" fill="none"><rect x="1" y="1" width="22" height="22" rx="2" fill="#bdbdbd" stroke="#333" strokeWidth="1.300" /><path d="M12 6v6" stroke="#000" strokeWidth="4" /><path d="M7 11h10l-5 5.500z" fill="#000" /><path d="M3 18h18" stroke="#000" strokeWidth="1.500" /><path d="M3 20.500h18" stroke="#000" strokeWidth="2.500" strokeDasharray="1 2" /></svg>
          <svg width="24" height="24" viewBox="0 0 24 24" fill="none"><path d="M5 19L19 5" stroke="#000" strokeWidth="2" /><circle cx="5" cy="19" r="2" fill="#fff" stroke="#000" /><circle cx="19" cy="5" r="2" fill="#fff" stroke="#000" /></svg>
          <svg width="24" height="24" viewBox="0 0 24 24" fill="none"><path d="M4 4h8v17H4z" fill="#fff" /><path d="M4 4h3v3H4zM9 4h3v3H9zM7 7h2v4H7zM4 11h3v3H4zM9 11h3v3H9zM7 14h2v4H7zM4 18h3v3H4z" fill="#000" /><path d="M11 10l9 9.500M20 10l-9 9.500" stroke="#d41a0c" strokeWidth="4" /></svg>
        </div>
      </div>
    </div>
  );
}

export default function App() {
  return (
    <div className="flex h-[1080px] w-[1920px] flex-col overflow-hidden bg-[#101510] font-['Inter',sans-serif]">
      <MenuBar />
      <div className="relative flex flex-1 flex-col overflow-hidden rounded-[9px] bg-[#292927]">
        <div className="flex h-[29px] items-center bg-[#383836] shadow-[inset_0_1px_0_#000,inset_0_2px_0_#6a6a68]">
          <div className="flex w-[120px] gap-[8px] pl-[8px]">
            <span className="size-3 rounded-full bg-[#ff5f57]" />
            <span className="size-3 rounded-full bg-[#febc2e]" />
            <span className="size-3 rounded-full bg-[#28c840]" />
          </div>
          <div className="flex-1 pt-px pr-[120px] text-center text-[13px] font-semibold tracking-[0.12px] text-[#b4b4b3]">Grasshopper - unnamed</div>
        </div>
        <Tabs />
        <Ribbon />
        <Toolbar />
        <Canvas />
        <div className="flex h-[25px] items-center bg-[#292927] text-[13px] font-medium text-[#e2e2e1]">
          <svg className="ml-[3px]" width="15" height="15" viewBox="0 0 15 15"><circle cx="7.500" cy="7.500" r="7" fill="#1d76d2" stroke="#0a2b7a" /><path d="M5.700 2.500v6M9.300 2.500v6" stroke="#fff" strokeWidth="2" /><circle cx="5.700" cy="11.500" r="1.200" fill="#fff" /><circle cx="9.300" cy="11.500" r="1.200" fill="#fff" /></svg>
          <span className="ml-[2px] tracking-[-0.17px]">Solution aborted by user after ~0.0 seconds (80 seconds ago)</span>
          <span className="mt-px mr-[71px] ml-auto text-[12.500px]">1.0.0008</span>
        </div>
        <span className="pointer-events-none absolute inset-0 rounded-[9px] border border-t-0 border-[#5d5d5b]" />
      </div>
    </div>
  );
}
